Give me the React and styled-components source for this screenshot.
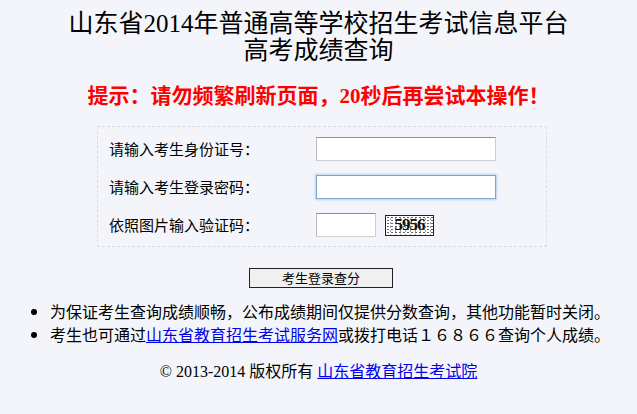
import React from 'react';
import styled, { createGlobalStyle } from 'styled-components';

const GlobalStyle = createGlobalStyle`
  body {
    margin: 0;
    background: #f4f5fa;
    font-family: 'Noto Sans CJK SC', 'Liberation Sans', sans-serif;
    color: #000;
  }
`;

const Page = styled.div`
  width: 637px;
  padding-top: 10px;
  text-align: center;
`;

const Title = styled.h1`
  margin: 0;
  font-size: 25px;
  line-height: 27px;
  font-weight: normal;
  font-family: 'Liberation Serif', 'Noto Sans CJK SC', serif;
`;

const Tip = styled.p`
  margin: 20px 0 0;
  color: #f00;
  font-size: 21px;
  line-height: 24px;
  font-weight: bold;
  font-family: 'Liberation Serif', 'Noto Sans CJK SC', serif;
`;

const FormBox = styled.div`
  width: 427px;
  margin: 18px 0 0 97px;
  padding: 10px 10px 9px 11px;
  border: 1px dashed #d9dce7;
  display: grid;
  grid-template-columns: 207px 1fr;
  row-gap: 14px;
  align-items: center;
  text-align: left;
`;

const Label = styled.label`
  font-size: 15px;
  line-height: 24px;
`;

const Field = styled.div`
  display: flex;
  align-items: center;
  gap: 9px;
`;

const Input = styled.input`
  box-sizing: border-box;
  width: ${(p) => p.$width}px;
  height: 24px;
  margin: 0;
  background: #fff;
  border: 1px solid ${(p) => (p.$focused ? '#7aa6d6' : '#cfcfcf')};
  border-top-color: ${(p) => (p.$focused ? '#7aa6d6' : '#8e8e8e')};
  border-left-color: ${(p) => (p.$focused ? '#7aa6d6' : '#bdbdbd')};
  box-shadow: ${(p) => (p.$focused ? '0 0 2px 1px #b6d1f0' : 'none')};
  outline: none;
`;

const Captcha = styled.span`
  box-sizing: border-box;
  width: 49px;
  height: 21px;
  display: inline-flex;
  align-items: center;
  justify-content: center;
  border: 1px solid #222;
  background-color: #fff;
  background-image: radial-gradient(#666 0.6px, transparent 0.9px),
    radial-gradient(#999 0.6px, transparent 0.9px);
  background-size: 4px 3px, 5px 4px;
  background-position: 0 0, 2px 1px;
  font-family: 'Liberation Serif', serif;
  font-weight: bold;
  font-size: 17px;
  letter-spacing: -1px;
  color: #111;
`;

const SubmitButton = styled.button`
  display: block;
  box-sizing: border-box;
  width: 144px;
  height: 20px;
  margin: 21px 0 0 249px;
  padding: 0;
  border: 1px solid #222;
  background: #f0f0f0;
  font-family: 'Noto Sans CJK SC', sans-serif;
  font-size: 13px;
  line-height: 18px;
  color: #000;
`;

const Notes = styled.ul`
  margin: 12px 0 0;
  padding-left: 50px;
  text-align: left;
  font-size: 16px;
  line-height: 23px;
  list-style: disc;
`;

const TextLink = styled.a`
  color: #0000ee;
  text-decoration: underline;
`;

const Footer = styled.p`
  margin: 16px 0 0;
  font-size: 16px;
  line-height: 20px;
  font-family: 'Liberation Serif', 'Noto Sans CJK SC', serif;
`;

export default function App() {
  return (
    <Page>
      <GlobalStyle />
      <Title>
        山东省2014年普通高等学校招生考试信息平台
        <br />
        高考成绩查询
      </Title>
      <Tip>提示：请勿频繁刷新页面，20秒后再尝试本操作！</Tip>

      <FormBox>
        <Label>请输入考生身份证号：</Label>
        <Field>
          <Input type="text" $width={180} />
        </Field>
        <Label>请输入考生登录密码：</Label>
        <Field>
          <Input type="password" $width={180} $focused />
        </Field>
        <Label>依照图片输入验证码：</Label>
        <Field>
          <Input type="text" $width={60} />
          <Captcha>5956</Captcha>
        </Field>
      </FormBox>

      <SubmitButton>考生登录查分</SubmitButton>

      <Notes>
        <li>为保证考生查询成绩顺畅，公布成绩期间仅提供分数查询，其他功能暂时关闭。</li>
        <li>
          考生也可通过<TextLink href="#">山东省教育招生考试服务网</TextLink>或拨打电话１６８６６查询个人成绩。
        </li>
      </Notes>

      <Footer>
        © 2013-2014 版权所有 <TextLink href="#">山东省教育招生考试院</TextLink>
      </Footer>
    </Page>
  );
}
